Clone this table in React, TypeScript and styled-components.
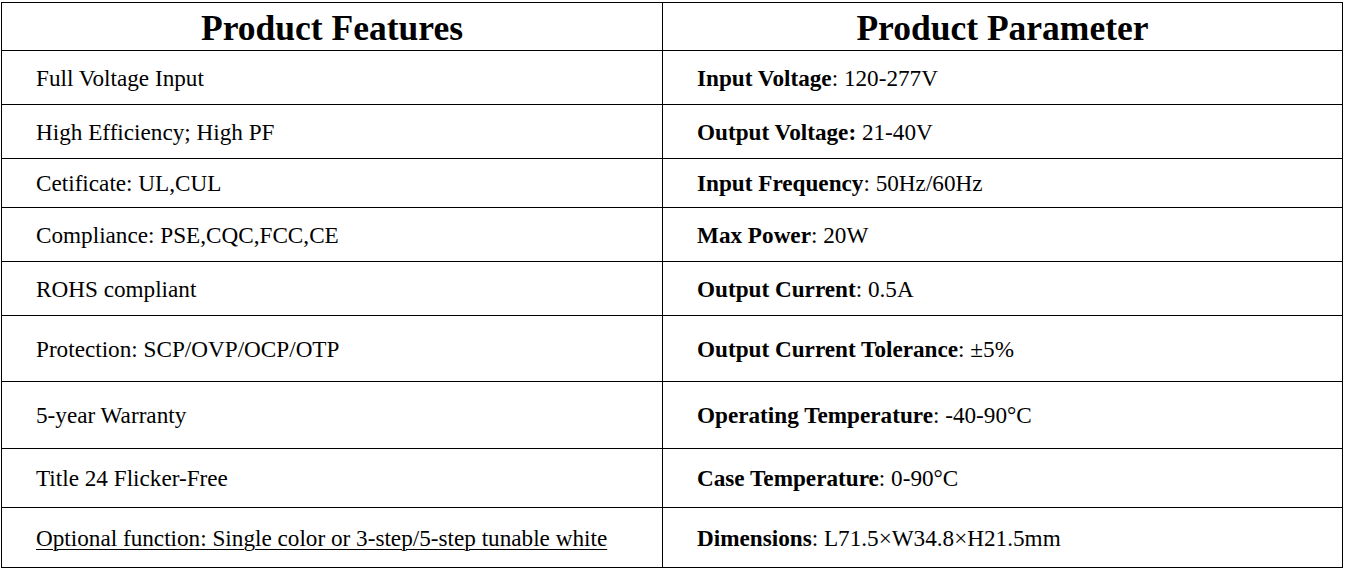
import styled, { createGlobalStyle } from 'styled-components'

const GlobalStyle = createGlobalStyle`
  html, body {
    margin: 0;
    padding: 0;
    background: #ffffff;
  }
  body {
    font-family: 'Liberation Serif', 'Times New Roman', serif;
    color: #000000;
  }
`

const rowHeights = [48, 54, 54, 49, 54, 54, 66, 67, 59, 60]

type Param = { label: string; value: string }

const rows: { feature: string; underline?: boolean; param: Param }[] = [
  { feature: 'Full Voltage Input', param: { label: 'Input Voltage', value: ': 120-277V' } },
  { feature: 'High Efficiency; High PF', param: { label: 'Output Voltage:', value: ' 21-40V' } },
  { feature: 'Cetificate: UL,CUL', param: { label: 'Input Frequency', value: ': 50Hz/60Hz' } },
  { feature: 'Compliance: PSE,CQC,FCC,CE', param: { label: 'Max Power', value: ': 20W' } },
  { feature: 'ROHS compliant', param: { label: 'Output Current', value: ': 0.5A' } },
  { feature: 'Protection: SCP/OVP/OCP/OTP', param: { label: 'Output Current Tolerance', value: ': \u00b15%' } },
  { feature: '5-year Warranty', param: { label: 'Operating Temperature', value: ': -40-90\u00b0C' } },
  { feature: 'Title 24 Flicker-Free', param: { label: 'Case Temperature', value: ': 0-90\u00b0C' } },
  {
    feature: 'Optional function: Single color or 3-step/5-step tunable white',
    underline: true,
    param: { label: 'Dimensions', value: ': L71.5\u00d7W34.8\u00d7H21.5mm' },
  },
]

const Table = styled.div`
  margin: 2px 0 0 1px;
  width: 1342px;
  display: grid;
  grid-template-columns: 661px 680px;
  grid-template-rows: ${rowHeights.map((h) => `${h}px`).join(' ')};
  border-top: 1px solid #000;
  border-left: 1px solid #000;
  box-sizing: border-box;
`

const Cell = styled.div`
  box-sizing: border-box;
  border-right: 1px solid #000;
  border-bottom: 1px solid #000;
  display: flex;
  align-items: center;
  padding: 2px 0 0 34px;
  font-size: 23.2px;
  line-height: 1;
  white-space: nowrap;
`

const HeadCell = styled(Cell)`
  justify-content: center;
  padding: 5px 0 0 0;
  font-size: 35.5px;
  font-weight: bold;
`

const Feature = styled.span<{ $underline?: boolean }>`
  text-decoration: ${(p) => (p.$underline ? 'underline' : 'none')};
  text-underline-offset: 3px;
  text-decoration-thickness: 1px;
`

const Label = styled.b`
  font-weight: bold;
`

function App() {
  return (
    <>
      <GlobalStyle />
      <Table>
        <HeadCell>Product Features</HeadCell>
        <HeadCell>Product Parameter</HeadCell>
        {rows.map((row) => (
          <>
            <Cell key={row.feature}>
              <Feature $underline={row.underline}>{row.feature}</Feature>
            </Cell>
            <Cell key={row.param.label}>
              <span>
                <Label>{row.param.label}</Label>
                {row.param.value}
              </span>
            </Cell>
          </>
        ))}
      </Table>
    </>
  )
}

export default App
